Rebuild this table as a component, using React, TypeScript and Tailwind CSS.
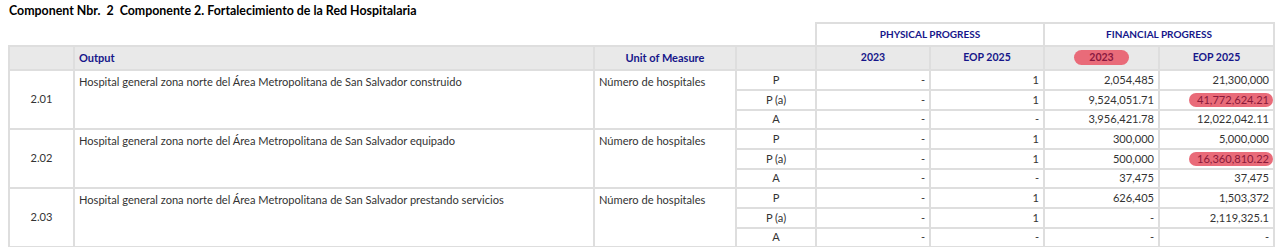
import React from 'react'

type Sub = { k: string; p23: string; pEop: string; f23: string; fEop: string; hl?: boolean }
type Row = { id: string; output: string; unit: string; subs: Sub[] }

const rows: Row[] = [
  {
    id: '2.01',
    output: 'Hospital general zona norte del Área Metropolitana de San Salvador construido',
    unit: 'Número de hospitales',
    subs: [
      { k: 'P', p23: '-', pEop: '1', f23: '2,054,485', fEop: '21,300,000' },
      { k: 'P (a)', p23: '-', pEop: '1', f23: '9,524,051.71', fEop: '41,772,624.21', hl: true },
      { k: 'A', p23: '-', pEop: '-', f23: '3,956,421.78', fEop: '12,022,042.11' },
    ],
  },
  {
    id: '2.02',
    output: 'Hospital general zona norte del Área Metropolitana de San Salvador equipado',
    unit: 'Número de hospitales',
    subs: [
      { k: 'P', p23: '-', pEop: '1', f23: '300,000', fEop: '5,000,000' },
      { k: 'P (a)', p23: '-', pEop: '1', f23: '500,000', fEop: '16,360,810.22', hl: true },
      { k: 'A', p23: '-', pEop: '-', f23: '37,475', fEop: '37,475' },
    ],
  },
  {
    id: '2.03',
    output: 'Hospital general zona norte del Área Metropolitana de San Salvador prestando servicios',
    unit: 'Número de hospitales',
    subs: [
      { k: 'P', p23: '-', pEop: '1', f23: '626,405', fEop: '1,503,372' },
      { k: 'P (a)', p23: '-', pEop: '1', f23: '-', fEop: '2,119,325.1' },
      { k: 'A', p23: '-', pEop: '-', f23: '-', fEop: '-' },
    ],
  },
]

const cell = 'border-2 border-[#dedede]'
const head = 'border-2 border-[#dedede] bg-[#e9e9e9] text-[#16168a] font-bold text-[10.5px] text-center'
const num = `${cell} text-right pr-[4px] align-middle`
const rowH = ['h-[20px]', 'h-[20px]', 'h-[19px]']

export default function App() {
  return (
    <div className="w-[1282px] h-[247px] overflow-hidden bg-white text-[#333] text-[11.1px]" style={{ fontFamily: 'Lato, "Open Sans", sans-serif' }}>
      <div className="pl-[9px] pt-[2px] h-[22px] text-[12.4px] font-bold text-black whitespace-pre">
        {'Component Nbr.  2  Componente 2. Fortalecimiento de la Red Hospitalaria'}
      </div>
      <table className="ml-[8px] border-collapse table-fixed w-[1265px]">
        <colgroup>
          <col className="w-[65px]" />
          <col className="w-[520px]" />
          <col className="w-[142px]" />
          <col className="w-[80px]" />
          <col className="w-[114px]" />
          <col className="w-[114px]" />
          <col className="w-[115px]" />
          <col className="w-[115px]" />
        </colgroup>
        <thead>
          <tr className="h-[23px]">
            <th colSpan={4} className="border-0" />
            <th colSpan={2} className={`${cell} text-[#16168a] font-bold text-[10px]`}>PHYSICAL PROGRESS</th>
            <th colSpan={2} className={`${cell} text-[#16168a] font-bold text-[10px]`}>FINANCIAL PROGRESS</th>
          </tr>
          <tr className="h-[24px]">
            <th className={head} />
            <th className={`${head} text-left pl-[4px] text-[11px]`}>Output</th>
            <th className={`${head} text-[11px]`}>Unit of Measure</th>
            <th className={head} />
            <th className={head}>2023</th>
            <th className={head}>EOP 2025</th>
            <th className={head}>
              <span className="inline-block bg-[#e96b79] text-[#8a1840] rounded-full px-[15px] leading-[15px]">2023</span>
            </th>
            <th className={head}>EOP 2025</th>
          </tr>
        </thead>
        <tbody>
          {rows.map((r) =>
            r.subs.map((s, i) => (
              <tr key={r.id + s.k} className={rowH[i]}>
                {i === 0 && (
                  <>
                    <td rowSpan={3} className={`${cell} text-center align-middle`}>{r.id}</td>
                    <td rowSpan={3} className={`${cell} align-top pl-[4px] pt-[3px]`}>{r.output}</td>
                    <td rowSpan={3} className={`${cell} align-top pl-[4px] pt-[3px]`}>{r.unit}</td>
                  </>
                )}
                <td className={`${cell} text-center`}>{s.k}</td>
                <td className={num}>{s.p23}</td>
                <td className={num}>{s.pEop}</td>
                <td className={num}>{s.f23}</td>
                <td className={num}>
                  {s.hl ? (
                    <span className="inline-block bg-[#e96b79] text-[#8a1a3a] rounded-full pl-[8px] pr-[4px] -mr-[4px] leading-[14px]">{s.fEop}</span>
                  ) : (
                    s.fEop
                  )}
                </td>
              </tr>
            ))
          )}
        </tbody>
      </table>
    </div>
  )
}
